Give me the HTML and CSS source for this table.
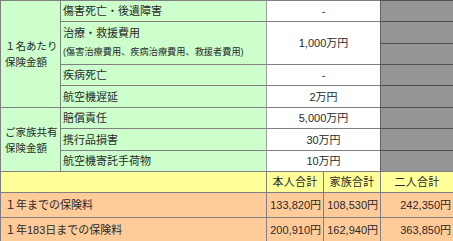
FILE: index.html
```html
<!DOCTYPE html>
<html lang="ja">
<head>
<meta charset="utf-8">
<link rel="stylesheet" href="styles.css">
</head>
<body>
<div class="sheet">
  <div class="c grp g r1 rs5"><span>１名あたり<br>保険金額</span></div>
  <div class="c lab g r1">傷害死亡・後遺障害</div>
  <div class="c val w r1">-</div>
  <div class="c gray r1"></div>

  <div class="c lab g r2 nb">治療・救援費用</div>
  <div class="c val w r2 rs2">1,000万円</div>
  <div class="c gray r2"></div>
  <div class="c lab g r3 nobt small">(傷害治療費用、疾病治療費用、救援者費用)</div>
  <div class="c gray r3"></div>

  <div class="c lab g r4">疾病死亡</div>
  <div class="c val w r4">-</div>
  <div class="c gray r4"></div>

  <div class="c lab g r5">航空機遅延</div>
  <div class="c val w r5">2万円</div>
  <div class="c gray r5"></div>

  <div class="c grp g r6 rs3"><span>ご家族共有<br>保険金額</span></div>
  <div class="c lab g r6">賠償責任</div>
  <div class="c val w r6">5,000万円</div>
  <div class="c gray r6"></div>

  <div class="c lab g r7">携行品損害</div>
  <div class="c val w r7">30万円</div>
  <div class="c gray r7"></div>

  <div class="c lab g r8">航空機寄託手荷物</div>
  <div class="c val w r8">10万円</div>
  <div class="c gray r8"></div>

  <div class="c wide y r9"></div>
  <div class="c hd y r9 k3">本人合計</div>
  <div class="c hd y r9 k4">家族合計</div>
  <div class="c hd y r9 k5">二人合計</div>

  <div class="c wide p r10 fee">１年までの保険料</div>
  <div class="c num p r10 k3">133,820円</div>
  <div class="c num p r10 k4">108,530円</div>
  <div class="c num p r10 k5">242,350円</div>

  <div class="c wide p r11 fee">１年183日までの保険料</div>
  <div class="c num p r11 k3">200,910円</div>
  <div class="c num p r11 k4">162,940円</div>
  <div class="c num p r11 k5">363,850円</div>
</div>
</body>
</html>
```

FILE: styles.css
```css
html, body {
  margin: 0;
  padding: 0;
  background: #ffffff;
  overflow: hidden;
}

.sheet {
  display: grid;
  grid-template-columns: 60px 206px 57px 57px 73px;
  grid-template-rows: 21px 22px 21px 21px 22px 21px 22px 21px 21px 25px 24px;
  width: 453px;
  font-family: "Liberation Sans", "Noto Sans CJK JP", sans-serif;
  font-size: 11px;
  color: #2a2a2a;
}

.c {
  box-sizing: border-box;
  border-top: 1px solid #808080;
  border-left: 1px solid #808080;
  display: flex;
  align-items: center;
  white-space: nowrap;
  overflow: hidden;
  line-height: 14px;
}

.g { background: #ccffcc; }
.w { background: #ffffff; }
.y { background: #ffff99; }
.p { background: #ffcc99; }

.gray {
  grid-column: 5;
  background: #969696;
  border-top-color: #505050;
  border-left-color: #606060;
}

.r1 { grid-row: 1; }
.r2 { grid-row: 2; }
.r3 { grid-row: 3; }
.r4 { grid-row: 4; }
.r5 { grid-row: 5; }
.r6 { grid-row: 6; }
.r7 { grid-row: 7; }
.r8 { grid-row: 8; }
.r9 { grid-row: 9; }
.r10 { grid-row: 10; }
.r11 { grid-row: 11; }

.rs5 { grid-row-end: span 5; }
.rs3 { grid-row-end: span 3; }
.rs2 { grid-row-end: span 2; }

.grp {
  grid-column: 1;
  padding-left: 4px;
  line-height: 16px;
  font-size: 10.5px;
}

.lab {
  grid-column: 2;
  padding-left: 2px;
  border-left-color: #7a8a7a;
}

.nobt {
  border-top: none;
}

.nb {
  padding-top: 1px;
}

.small {
  font-size: 9.2px;
  padding-top: 0;
  padding-bottom: 3px;
}

.val {
  grid-column: 3 / span 2;
  justify-content: center;
  border-left-color: #a0a0a0;
}

.wide {
  grid-column: 1 / span 2;
  padding-left: 4px;
}

.fee {
  padding-top: 0;
}

.k3 { grid-column: 3; }
.k4 { grid-column: 4; }
.k5 { grid-column: 5; }

.hd {
  justify-content: center;
  letter-spacing: 0.3px;
}

.num {
  justify-content: flex-end;
  padding-right: 2px;
  padding-top: 0;
}
```
